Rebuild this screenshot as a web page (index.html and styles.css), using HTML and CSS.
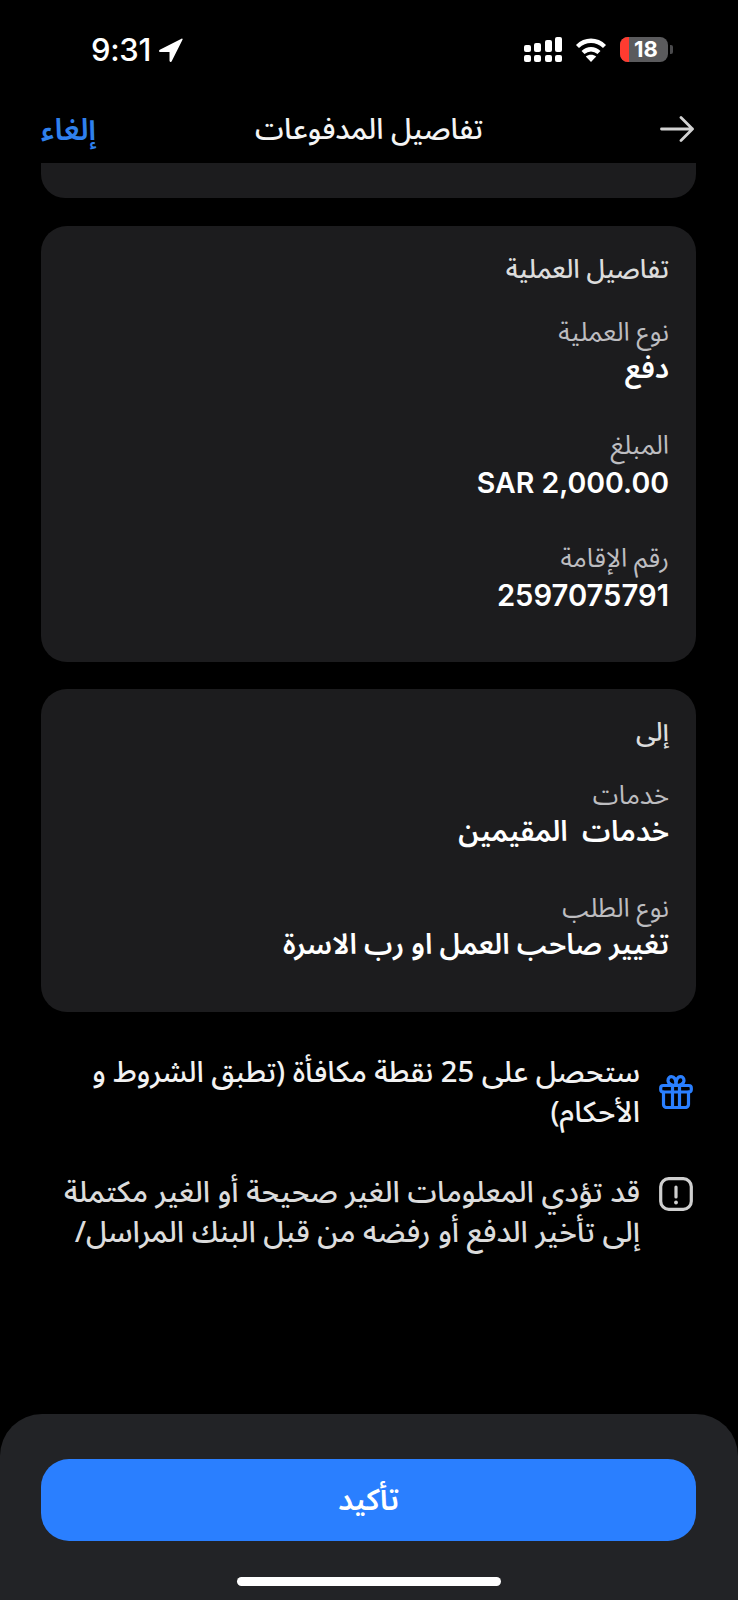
FILE: index.html
```html
<!DOCTYPE html>
<html lang="ar">
<head>
<meta charset="utf-8">
<title>تفاصيل المدفوعات</title>
<link rel="stylesheet" href="styles.css">
</head>
<body>
<div class="app">
  <div class="status" dir="ltr">
    <div class="status-left">
      <span class="time">9:31</span>
      <svg class="loc" viewBox="0 0 24 24"><path d="M22.500.7.800 11.800c-1.200.7-.9 2.200.5 2.200H10.500v8.800c0 1.300 1.600 1.700 2.200.5L23.500 1.700c.4-.8-.2-1.400-1-1z" fill="#fff"/></svg>
    </div>
    <div class="status-right">
      <svg class="signal" viewBox="0 0 38 25" fill="#fff">
        <rect x="0" y="8" width="7" height="7" rx="2"/><rect x="10" y="6" width="7" height="9" rx="2"/><rect x="21" y="3" width="7" height="12" rx="2"/><rect x="31" y="0" width="7" height="15" rx="2"/>
        <rect x="0" y="18" width="7" height="7" rx="2"/><rect x="10" y="18" width="7" height="7" rx="2"/><rect x="21" y="18" width="7" height="7" rx="2"/><rect x="31" y="18" width="7" height="7" rx="2"/>
      </svg>
      <svg class="wifi" viewBox="0 0 32 25" fill="none" stroke="#fff" stroke-width="4.4">
        <path d="M2.500 9.500c8-7.600 19-7.600 27 0"/><path d="M8 15.500c4.800-4.400 11.200-4.400 16 0"/><path d="M16 25l-5.200-5.400c3-2.600 7.400-2.600 10.400 0z" fill="#fff" stroke="none"/>
      </svg>
      <div class="battery"><span class="battery-level"></span><span class="battery-text">18</span></div>
      <span class="battery-nub"></span>
    </div>
  </div>

  <header class="nav">
    <svg class="back" viewBox="0 0 34 26" fill="none" stroke="#d2d2d2" stroke-width="2.800" stroke-linecap="round" stroke-linejoin="round"><path d="M1.500 13h31M21 1.500 32.500 13 21 24.500"/></svg>
    <h1 class="nav-title">تفاصيل المدفوعات</h1>
    <a class="cancel">إلغاء</a>
  </header>

  <main class="content">
    <div class="stub"></div>
    <section class="card">
      <h2 class="card-title">تفاصيل العملية</h2>
      <div class="item"><div class="label">نوع العملية</div><div class="value value-ar">دفع</div></div>
      <div class="item"><div class="label">المبلغ</div><div class="value" dir="ltr">SAR 2,000.00</div></div>
      <div class="item"><div class="label">رقم الإقامة</div><div class="value value-num">2597075791</div></div>
    </section>
    <section class="card card-to">
      <h2 class="card-title">إلى</h2>
      <div class="item"><div class="label">خدمات</div><div class="value value-ar">خدمات  المقيمين</div></div>
      <div class="item"><div class="label">نوع الطلب</div><div class="value value-ar">تغيير صاحب العمل او رب الاسرة</div></div>
    </section>
    <div class="notice notice-reward">
      <svg class="notice-icon gift" viewBox="0 0 34 34" fill="none" stroke="#2a7fff" stroke-width="3.200" stroke-linecap="round" stroke-linejoin="round">
        <rect x="1.700" y="10.500" width="30.600" height="6.500" rx="2.500"/>
        <path d="M4.500 17v12.500a3 3 0 0 0 3 3h19a3 3 0 0 0 3-3V17M13.500 10.500v22M20.500 10.500v22"/>
        <path d="M17 10.500C13.500 10.500 9 9 9 5.500 9 3 10.700 1.700 12.500 1.700 15.500 1.700 17 5.500 17 10.500c0-5 1.500-8.800 4.500-8.800 1.800 0 3.500 1.300 3.500 3.800 0 3.500-4.500 5-8 5z"/>
      </svg>
      <p class="notice-text reward-text">ستحصل على 25 نقطة مكافأة (تطبق الشروط و الأحكام)</p>
    </div>
    <div class="notice notice-warn">
      <svg class="notice-icon warn" viewBox="0 0 34 34" fill="none" stroke="#cfcfcf" stroke-width="3.200" stroke-linecap="round">
        <rect x="1.700" y="1.700" width="30.600" height="30.600" rx="8"/>
        <path d="M17 10v10"/><path d="M17 25.500v.1" stroke-width="3.800"/>
      </svg>
      <p class="notice-text">قد تؤدي المعلومات الغير صحيحة أو الغير مكتملة إلى تأخير الدفع أو رفضه من قبل البنك المراسل/</p>
    </div>
  </main>

  <footer class="footer">
    <button class="confirm">تأكيد</button>
    <div class="home-bar"></div>
  </footer>
</div>
</body>
</html>
```

FILE: styles.css
```css
* { box-sizing: border-box; margin: 0; padding: 0; }
html, body { background: #000; }
body {
  width: 738px;
  height: 1600px;
  overflow: hidden;
  font-family: "Noto Sans Arabic", "DejaVu Sans", Inter, sans-serif;
  color: #fff;
}
.app { display: flex; flex-direction: column; height: 1600px; }

.status {
  height: 100px;
  flex: none;
  display: flex;
  justify-content: space-between;
  padding: 37px 65px 0 91px;
}
.status-left { display: flex; align-items: center; height: 25px; gap: 8px; }
.time { font: 500 31px/25px Inter, sans-serif; letter-spacing: -0.3px; }
.loc { width: 24px; height: 24px; }
.status-right { display: flex; align-items: center; height: 25px; }
.signal { width: 38px; height: 25px; margin-right: 13px; }
.wifi { width: 32px; height: 25px; margin-right: 13px; }
.battery {
  position: relative;
  width: 48px;
  height: 25px;
  border-radius: 8px;
  background: #5b5b5d;
  overflow: hidden;
  display: flex;
  align-items: center;
  justify-content: center;
}
.battery-level { position: absolute; left: 0; top: 0; bottom: 0; width: 9px; background: #ff3b30; }
.battery-text { position: relative; font: 700 22px/25px Inter, sans-serif; color: #fff; padding-left: 4px; }
.battery-nub { width: 3px; height: 9px; margin-left: 2px; background: #4a4a4c; border-radius: 0 2px 2px 0; }

.nav {
  height: 63px;
  flex: none;
  position: relative;
  display: flex;
  align-items: center;
  justify-content: space-between;
  padding: 0 44px 5px 41px;
  direction: ltr;
}
.nav-title {
  position: absolute;
  left: 0;
  right: 0;
  top: 8px;
  text-align: center;
  direction: rtl;
  font-size: 29px;
  line-height: 44px;
  font-weight: 500;
  color: #f4f4f4;
}
.cancel { order: -1; font-size: 30px; font-weight: 600; line-height: 44px; padding-top: 3px; color: #2f80ed; direction: rtl; }
.back { width: 34px; height: 26px; order: 1; }

.content {
  flex: 1;
  min-height: 0;
  overflow: hidden;
  padding: 0 42px 0 41px;
  direction: rtl;
}
.stub { height: 35px; background: #1c1c1e; border-radius: 0 0 24px 24px; margin-bottom: 28px; }
.card { background: #1c1c1e; border-radius: 26px; padding: 26px 27px 8px; height: 436px; margin-bottom: 27px; }
.card-to { height: 323px; margin-bottom: 41px; }
.card-title { font-size: 26px; line-height: 36px; font-weight: 500; color: #dcdcdc; margin-bottom: 27px; }
.item { padding-bottom: 39px; }
.label { font-size: 26px; line-height: 36px; color: #bdbdc0; }
.value { font-size: 28.5px; line-height: 38px; font-weight: 600; color: #fff; font-family: Inter, "Noto Sans Arabic", "DejaVu Sans", sans-serif; text-align: right; white-space: pre-wrap; }
.value-ar { margin-top: -2px; margin-bottom: 2px; }
.value-num { font-size: 29.2px; }

.notice { display: flex; gap: 19px; }
.notice-reward { margin-bottom: 40px; color: #f2f2f2; }
.notice-warn { color: #dcdcdc; }
.notice-icon { width: 34px; height: 34px; flex: none; margin-right: 3px; }
.gift { margin-top: 22px; }
.warn { margin-top: 4px; }
.notice-text { font-size: 29.5px; line-height: 40px; font-weight: 500; }
.reward-text { font-size: 29.2px; }

.footer {
  flex: none;
  height: 186px;
  background: #222326;
  border-radius: 42px 42px 0 0;
  padding: 45px 42px 0 41px;
  display: flex;
  flex-direction: column;
  align-items: center;
}
.confirm {
  width: 100%;
  height: 82px;
  border: 0;
  border-radius: 28px;
  background: #2a7fff;
  color: #fff;
  font-family: inherit;
  font-size: 30px;
  font-weight: 600;
}
.home-bar { width: 264px; height: 9px; border-radius: 5px; background: #fff; margin-top: 36px; }
```
